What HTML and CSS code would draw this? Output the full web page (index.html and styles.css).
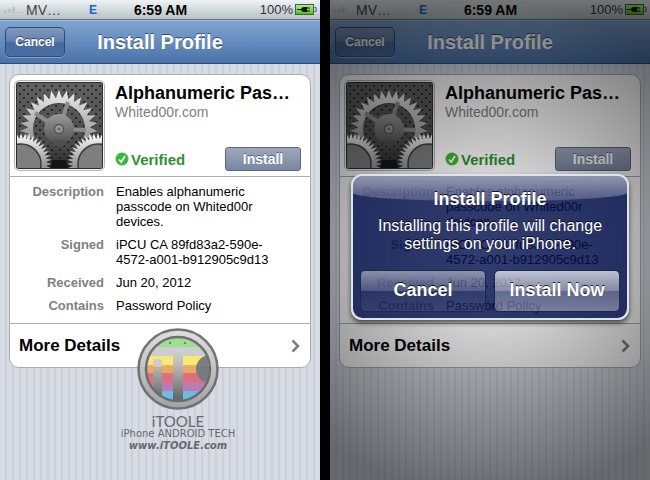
FILE: index.html
```html
<!DOCTYPE html>
<html lang="en">
<head>
    <meta charset="UTF-8">
    <meta name="viewport" content="width=device-width, initial-scale=1.0">
    <title>Install Profile</title>
    <link rel="stylesheet" href="styles.css">
</head>
<body>

    <!-- shared icons -->
    <svg class="sprite" width="0" height="0" aria-hidden="true">
        <defs>
            <linearGradient id="gearFill" x1="0" y1="0" x2="0" y2="1">
                <stop offset="0" stop-color="#eee"/>
                <stop offset="0.6" stop-color="#999"/>
                <stop offset="1" stop-color="#777"/>
            </linearGradient>
            <linearGradient id="smallGearFill" x1="0" y1="0" x2="0" y2="1">
                <stop offset="0" stop-color="#fff"/>
                <stop offset="0.5" stop-color="#999"/>
                <stop offset="1" stop-color="#777"/>
            </linearGradient>
            <linearGradient id="hubFill" x1="0" y1="0" x2="0" y2="1">
                <stop offset="0" stop-color="#999"/>
                <stop offset="1" stop-color="#505050"/>
            </linearGradient>
            <linearGradient id="plateFill" x1="0" y1="0" x2="0" y2="1">
                <stop offset="0" stop-color="#606060"/>
                <stop offset="0.7" stop-color="#4c4c4c"/>
                <stop offset="1" stop-color="#2a2a2a"/>
            </linearGradient>
            <linearGradient id="batteryFill" x1="0" y1="0" x2="0" y2="1">
                <stop offset="0" stop-color="#b4ec8c"/>
                <stop offset="0.5" stop-color="#7be03c"/>
                <stop offset="1" stop-color="#4fbd14"/>
            </linearGradient>
            <pattern id="holes" width="8" height="8" patternUnits="userSpaceOnUse">
                <circle cx="2" cy="2" r="1.1" fill="#1a1a1a"/>
                <circle cx="6" cy="6" r="1.1" fill="#1a1a1a"/>
            </pattern>
            <clipPath id="plateClip"><rect x="3" y="3" width="85" height="85" rx="2"/></clipPath>
            <clipPath id="upperClip"><rect x="0" y="0" width="91" height="58"/></clipPath>
        </defs>
        <symbol id="settings-icon" viewBox="0 0 91 91">
            <rect x="0.5" y="0.5" width="90" height="90" rx="5" fill="#f4f4f4" stroke="#b4b4b4"/>
            <rect x="2" y="2" width="87" height="87" rx="3" fill="#2c2c2c"/>
            <g clip-path="url(#plateClip)">
                <rect x="3" y="3" width="85" height="85" fill="url(#plateFill)"/>
                <rect x="3" y="3" width="85" height="85" fill="url(#holes)"/>
                <g clip-path="url(#upperClip)">
                    <path class="gear" data-cx="45" data-cy="50" data-tip="39" data-root="31" data-hole="26" data-teeth="31" fill="#222" fill-rule="evenodd" opacity="0.5"/>
                    <path class="gear" data-cx="45" data-cy="49" data-tip="39" data-root="31" data-hole="26" data-teeth="31" fill="url(#gearFill)" fill-rule="evenodd"/>
                </g>
                <g stroke="#8c8c8c" stroke-width="4">
                    <path d="M45 49L72 50"/>
                    <path d="M45 49L54 22"/>
                    <path d="M45 49L21 33"/>
                </g>
                <circle cx="45" cy="49" r="15" fill="url(#hubFill)"/>
                <path d="M38 60h14l-2 6h-10z" fill="#505050"/>
                <circle cx="45" cy="49" r="4.500" fill="#999" stroke="#555" stroke-width="1.500"/>
                <circle cx="45" cy="49" r="1.500" fill="#666"/>
                <path d="M36 88l2-8h14l2 8z" fill="#151515"/>
                <path class="gear" data-cx="7" data-cy="84" data-tip="31" data-root="25" data-hole="0" data-teeth="44" fill="url(#smallGearFill)"/>
                <path class="gear" data-cx="84" data-cy="84" data-tip="31" data-root="25" data-hole="0" data-teeth="44" fill="url(#smallGearFill)"/>
                <circle cx="7" cy="84" r="20" fill="#7e7e7e" stroke="#3a3a3a" stroke-width="1.500"/>
                <circle cx="84" cy="84" r="20" fill="#7e7e7e" stroke="#3a3a3a" stroke-width="1.500"/>
            </g>
        </symbol>
        <symbol id="signal-icon" viewBox="0 0 20 6">
            <path d="M0 3h3v3H0zM4 2h3v4H4zM8 0h3v6H8z" fill="#b6c2cc"/>
            <path d="M12 5h3v1h-3zM16 5h3v1h-3z" fill="#b6c2cc"/>
        </symbol>
        <symbol id="battery-icon" viewBox="0 0 22 12">
            <rect x="0.5" y="0.5" width="18" height="10" fill="url(#batteryFill)" stroke="#4a5560"/>
            <path d="M19.500 3.500h1.500v4h-1.500" fill="none" stroke="#4a5560"/>
            <path d="M2 5h4q1-2 3-2h3v5H9q-2 0-3-2H2zM12 3.500h3v1h-3zM12 6.500h3v1h-3z" fill="#111"/>
        </symbol>
        <symbol id="check-icon" viewBox="0 0 14 14">
            <circle cx="7" cy="7" r="6.500" fill="#3cb83a"/>
            <path d="M4 7.500l2.200 2.500L10 4" fill="none" stroke="#fff" stroke-width="1.800"/>
        </symbol>
        <symbol id="chevron-icon" viewBox="0 0 9 14">
            <path d="M1.500 1.500L7 7l-5.500 5.500" fill="none" stroke="#808080" stroke-width="2.600"/>
        </symbol>
    </svg>

    <div class="phones">

        <section class="phone">
            <div class="status-bar">
                <div class="status-left">
                    <svg class="signal" width="20" height="6"><use href="#signal-icon"/></svg>
                    <span class="carrier">MV…</span>
                    <span class="network">E</span>
                </div>
                <span class="time">6:59 AM</span>
                <div class="status-right">
                    <span>100%</span>
                    <svg width="22" height="12"><use href="#battery-icon"/></svg>
                </div>
            </div>
            <header class="nav-bar">
                <button type="button" class="nav-btn">Cancel</button>
                <h1>Install Profile</h1>
            </header>
            <main class="content">
                <div class="card">
                    <div class="profile">
                        <svg width="91" height="91"><use href="#settings-icon"/></svg>
                        <div class="profile-info">
                            <h2>Alphanumeric Pas…</h2>
                            <p class="org">Whited00r.com</p>
                            <div class="profile-actions">
                                <span class="verified"><svg width="14" height="14"><use href="#check-icon"/></svg>Verified</span>
                                <button type="button" class="install-btn">Install</button>
                            </div>
                        </div>
                    </div>
                    <dl class="details">
                        <dt>Description</dt>
                        <dd>Enables alphanumeric passcode on Whited00r devices.</dd>
                        <dt>Signed</dt>
                        <dd>iPCU CA 89fd83a2-590e-4572-a001-b912905c9d13</dd>
                        <dt>Received</dt>
                        <dd>Jun 20, 2012</dd>
                        <dt>Contains</dt>
                        <dd>Password Policy</dd>
                    </dl>
                    <a href="#" class="more">More Details <svg width="9" height="14"><use href="#chevron-icon"/></svg></a>
                </div>
            </main>

            <div class="watermark">
                <svg width="82" height="82" viewBox="0 0 82 82" aria-hidden="true">
                    <defs>
                        <linearGradient id="ringFill" x1="0" y1="0" x2="0" y2="1">
                            <stop offset="0" stop-color="#dcdcdc"/>
                            <stop offset="1" stop-color="#9c9ea2"/>
                        </linearGradient>
                        <linearGradient id="letterFill" x1="0" y1="0" x2="0" y2="1">
                            <stop offset="0" stop-color="#cfcfcf"/>
                            <stop offset="0.4" stop-color="#aaa"/>
                            <stop offset="1" stop-color="#505050"/>
                        </linearGradient>
                        <clipPath id="logoClip"><circle cx="41" cy="41" r="31"/></clipPath>
                    </defs>
                    <circle cx="41" cy="41" r="39.500" fill="url(#ringFill)" stroke="#666" stroke-width="2.500"/>
                    <g clip-path="url(#logoClip)">
                        <path d="M8 8h66v66H8z" fill="#c8c8c8"/>
                        <path d="M8 8h66v11H8z" fill="#96da86"/>
                        <path d="M8 28h66v9H8z" fill="#f7e765"/>
                        <path d="M8 37h66v8H8z" fill="#eea45c"/>
                        <path d="M8 45h66v9H8z" fill="#df6471"/>
                        <path d="M8 54h66v9H8z" fill="#bd70ad"/>
                        <path d="M8 63h66v11H8z" fill="#5cbbe5"/>
                        <rect x="16" y="31" width="9" height="8" rx="2" fill="#c8c8c8"/>
                        <path d="M16 41h9v33h-9zM36 21h10v53H36z" fill="url(#letterFill)"/>
                        <circle cx="73" cy="41" r="14" fill="#707174"/>
                        <circle cx="33" cy="15" r="1" fill="#555"/>
                        <circle cx="48" cy="15" r="1" fill="#555"/>
                    </g>
                    <circle cx="41" cy="41" r="32" fill="none" stroke="#606060" stroke-width="2.500"/>
                </svg>
                <span class="wm-name">iTOOLE</span>
                <span class="wm-tag">iPhone ANDROID TECH</span>
                <span class="wm-url">www.iTOOLE.com</span>
            </div>
        </section>

        <section class="phone">
            <div class="status-bar">
                <div class="status-left">
                    <svg class="signal" width="20" height="6"><use href="#signal-icon"/></svg>
                    <span class="carrier">MV…</span>
                    <span class="network">E</span>
                </div>
                <span class="time">6:59 AM</span>
                <div class="status-right">
                    <span>100%</span>
                    <svg width="22" height="12"><use href="#battery-icon"/></svg>
                </div>
            </div>
            <header class="nav-bar">
                <button type="button" class="nav-btn">Cancel</button>
                <h1>Install Profile</h1>
            </header>
            <main class="content">
                <div class="card">
                    <div class="profile">
                        <svg width="91" height="91"><use href="#settings-icon"/></svg>
                        <div class="profile-info">
                            <h2>Alphanumeric Pas…</h2>
                            <p class="org">Whited00r.com</p>
                            <div class="profile-actions">
                                <span class="verified"><svg width="14" height="14"><use href="#check-icon"/></svg>Verified</span>
                                <button type="button" class="install-btn">Install</button>
                            </div>
                        </div>
                    </div>
                    <dl class="details">
                        <dt>Description</dt>
                        <dd>Enables alphanumeric passcode on Whited00r devices.</dd>
                        <dt>Signed</dt>
                        <dd>iPCU CA 89fd83a2-590e-4572-a001-b912905c9d13</dd>
                        <dt>Received</dt>
                        <dd>Jun 20, 2012</dd>
                        <dt>Contains</dt>
                        <dd>Password Policy</dd>
                    </dl>
                    <a href="#" class="more">More Details <svg width="9" height="14"><use href="#chevron-icon"/></svg></a>
                </div>
            </main>

            <div class="overlay">
                <div class="alert" role="alertdialog" aria-labelledby="alertTitle" aria-describedby="alertText">
                    <h2 id="alertTitle">Install Profile</h2>
                    <p id="alertText">Installing this profile will change settings on your iPhone.</p>
                    <div class="alert-buttons">
                        <button type="button">Cancel</button>
                        <button type="button" class="primary">Install Now</button>
                    </div>
                </div>
            </div>
        </section>

    </div>

    <script src="gears.js"></script>
</body>
</html>
```
FILE: styles.css
```css
* {
    box-sizing: border-box;
}
body {
    margin: 0;
    background-color: #000;
    font-family: "Liberation Sans", Arial, sans-serif;
}
h1, h2, p, dl, dd {
    margin: 0;
}
svg {
    display: block;
    flex-shrink: 0;
}
button {
    font-family: inherit;
    font-weight: bold;
    color: #fff;
    padding: 0;
    cursor: pointer;
}
.sprite {
    position: absolute;
}
.phones {
    display: flex;
    gap: 10px;
    min-height: 100vh;
}
.phone {
    position: relative;
    flex: 1;
    background: repeating-linear-gradient(to right, #d7dbe4 0, #d7dbe4 5px, #cbd0d9 5px, #cbd0d9 7px);
}

/* status bar */
.status-bar {
    display: grid;
    grid-template-columns: 1fr auto 1fr;
    align-items: center;
    height: 20px;
    padding: 0 3px 0 4px;
    border-bottom: 1px solid #6b7580;
    background: linear-gradient(#eef3f5, #b9c2c6);
    font-size: 14px;
    line-height: 18px;
}
.status-left {
    display: flex;
    align-items: center;
    gap: 2px;
}
.carrier {
    color: #444;
}
.network {
    margin-left: 26px;
    font-size: 12px;
    font-weight: bold;
    color: #1566d0;
}
.time {
    font-weight: bold;
}
.status-right {
    display: flex;
    align-items: center;
    justify-content: flex-end;
    gap: 2px;
    font-size: 13px;
    color: #333;
}

/* navigation bar */
.nav-bar {
    display: grid;
    grid-template-columns: 1fr auto 1fr;
    align-items: center;
    height: 44px;
    padding: 0 5px;
    border-top: 1px solid #a5bedb;
    border-bottom: 1px solid #2d4a74;
    background: linear-gradient(#7fa5d2, #4b72a9);
}
.nav-bar h1 {
    font-size: 20px;
    line-height: 24px;
    color: #fff;
    text-shadow: 0 -1px 0 rgba(0,0,0,0.5);
}
.nav-btn {
    width: 60px;
    height: 30px;
    border: 1px solid #304a72;
    border-radius: 5px;
    background: linear-gradient(#8399bd, #5f7eac 50%, #486b9d 50%, #4a6ea3);
    box-shadow: 0 1px 0 rgba(255,255,255,0.3);
    font-size: 12px;
    text-shadow: 0 -1px 0 rgba(0,0,0,0.5);
}

/* profile card */
.content {
    padding: 10px 9px;
}
.card {
    border: 1px solid #a9acb1;
    border-radius: 10px;
    background-color: #fff;
}
.profile {
    display: flex;
    gap: 10px;
    padding: 5px 9px 5px 4px;
    border-bottom: 1px solid #a9acb1;
}
.profile-info {
    flex: 1;
    display: flex;
    flex-direction: column;
    padding-top: 2px;
}
.profile-info h2 {
    font-size: 18px;
    line-height: 22px;
    white-space: nowrap;
}
.org {
    font-size: 14px;
    line-height: 16px;
    color: #808080;
}
.profile-actions {
    display: flex;
    align-items: center;
    justify-content: space-between;
    margin-top: auto;
}
.verified {
    display: flex;
    align-items: center;
    gap: 2px;
    font-size: 15px;
    font-weight: bold;
    color: #2f9131;
}
.install-btn {
    width: 76px;
    height: 24px;
    border: 1px solid #5b6682;
    border-radius: 3px;
    background: linear-gradient(#a0a8bb, #7886a3);
    font-size: 14px;
    text-shadow: 0 -1px 0 rgba(0,0,0,0.4);
}
.details {
    display: grid;
    grid-template-columns: 94px 1fr;
    gap: 8px 12px;
    padding: 7px 20px 10px 0;
    font-size: 13px;
    line-height: 15px;
}
.details dt {
    font-weight: bold;
    text-align: right;
    color: #808080;
}
.more {
    display: flex;
    align-items: center;
    justify-content: space-between;
    height: 44px;
    padding: 0 10px 0 9px;
    border-top: 1px solid #a9acb1;
    font-size: 17px;
    font-weight: bold;
    color: #000;
    text-decoration: none;
}

/* watermark over the first screen */
.watermark {
    position: absolute;
    top: 328px;
    left: 118px;
    width: 120px;
    display: flex;
    flex-direction: column;
    align-items: center;
    color: #5a5d63;
    font-family: "DejaVu Sans", sans-serif;
    white-space: nowrap;
    opacity: 0.9;
}
.wm-name {
    margin-top: 4px;
    font-family: Lato, sans-serif;
    font-size: 15px;
    line-height: 14px;
}
.wm-tag {
    font-size: 10px;
    line-height: 12px;
}
.wm-url {
    font-size: 10px;
    line-height: 12px;
    font-weight: bold;
    font-style: italic;
}

/* alert dialog */
.overlay {
    position: absolute;
    inset: 0;
    display: flex;
    align-items: center;
    justify-content: center;
    padding-top: 13px;
    background: radial-gradient(circle at 50% 52%, rgba(0,0,0,0.02), rgba(0,0,0,0.52) 250px);
}
.alert {
    position: relative;
    isolation: isolate;
    width: 278px;
    padding: 11px 7px 6px;
    border: 2px solid #dfe3ec;
    border-radius: 11px;
    background: rgba(0,14,76,0.8);
    background-clip: padding-box;
    box-shadow: 0 3px 5px rgba(0,0,0,0.6);
    color: #fff;
    text-align: center;
    text-shadow: 0 -1px 0 rgba(0,0,0,0.8);
}
/* glossy cap */
.alert::before {
    content: "";
    position: absolute;
    z-index: -1;
    top: 0;
    left: 0;
    right: 0;
    height: 25px;
    border-radius: 9px 9px 50% 50% / 9px 9px 8px 8px;
    background: linear-gradient(rgba(255,255,255,0.5), rgba(255,255,255,0.18));
}
.alert h2 {
    font-size: 18px;
    line-height: 24px;
}
.alert p {
    padding: 6px 10px 0;
    font-size: 16px;
    line-height: 18px;
}
.alert-buttons {
    display: flex;
    gap: 8px;
    margin-top: 17px;
}
.alert-buttons button {
    flex: 1;
    height: 42px;
    border: 1px solid #1c2749;
    border-radius: 5px;
    background: linear-gradient(rgba(255,255,255,0.45), rgba(255,255,255,0.18) 50%, rgba(255,255,255,0.02) 50%, rgba(255,255,255,0.08));
    font-size: 18px;
    text-shadow: 0 -1px 0 rgba(0,0,0,0.8);
}
.alert-buttons .primary {
    background: linear-gradient(rgba(255,255,255,0.7), rgba(255,255,255,0.42) 50%, rgba(255,255,255,0.25) 50%, rgba(255,255,255,0.36));
}
```
FILE: gears.js
```js
// build the toothed outline for every gear in the settings icon
document.querySelectorAll(".gear").forEach(function (gear) {
    const cx = Number(gear.dataset.cx);
    const cy = Number(gear.dataset.cy);
    const tip = Number(gear.dataset.tip);
    const root = Number(gear.dataset.root);
    const hole = Number(gear.dataset.hole);
    const teeth = Number(gear.dataset.teeth);
    const points = [];

    for (let i = 0; i < teeth * 2; i++) {
        const r = i % 2 ? root : tip;
        const angle = Math.PI * i / teeth - Math.PI / 2;
        points.push((cx + r * Math.cos(angle)).toFixed(2) + " " + (cy + r * Math.sin(angle)).toFixed(2));
    }

    let d = "M" + points.join("L") + "Z";
    if (hole) {
        d += `M${cx - hole} ${cy}a${hole} ${hole} 0 1 0 ${hole * 2} 0a${hole} ${hole} 0 1 0 ${-hole * 2} 0Z`;
    }
    gear.setAttribute("d", d);
});
```
